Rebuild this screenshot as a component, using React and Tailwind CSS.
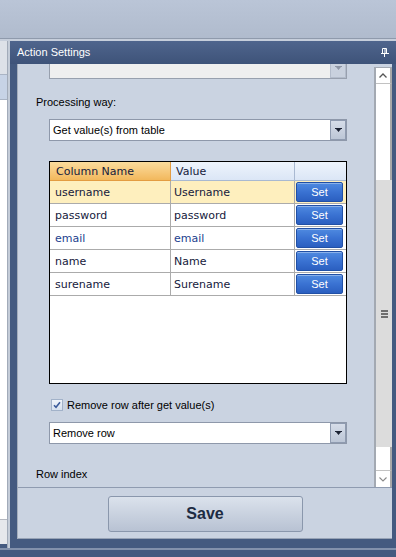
import React from "react";

function Arrow({ faded }) {
  return (
    <svg width="7" height="4" viewBox="0 0 7 4" className="block">
      <path d="M0 0h7v1H0z M1 1h5L3.5 4z" fill={faded ? "#8d95a5" : "#1b2233"} />
    </svg>
  );
}

function Combo({ text, disabled, className = "" }) {
  return (
    <div
      className={
        "ml-[31px] w-[298px] h-[22px] shrink-0 border flex items-stretch " +
        (disabled ? "bg-[#efefef] border-[#98a0ae] " : "bg-white border-[#8e98aa] ") +
        className
      }
    >
      <div className="flex-1 flex items-center pl-[3px] text-black leading-none">{text}</div>
      <div
        className={
          "w-[16px] border flex items-center justify-center " +
          (disabled
            ? "border-[#b3bccb] bg-[#c9d1de]"
            : "border-[#8f9bb0] bg-gradient-to-b from-[#d6dde9] to-[#bcc6d6]")
        }
      >
        <Arrow faded={disabled} />
      </div>
    </div>
  );
}

function SetButton() {
  return (
    <div className="ml-px w-[47px] h-[20px] rounded-[2px] border border-[#2150a6] bg-gradient-to-b from-[#4f8ae0] via-[#3a72d2] to-[#2b5fc0] flex items-center justify-center text-white text-[11px] leading-none font-['Liberation_Sans',Arial,sans-serif] shadow-[inset_0_1px_0_rgba(255,255,255,0.35)]">
      Set
    </div>
  );
}

export default function App() {
  const rows = [
    ["username", "Username", true],
    ["password", "password"],
    ["email", "email"],
    ["name", "Name"],
    ["surename", "Surename"],
  ];
  return (
    <div className="w-[396px] h-[557px] overflow-hidden bg-[#445a80] flex flex-col font-['Liberation_Sans',Arial,sans-serif] text-[11px]">
      {/* top toolbar area */}
      <div className="h-[38px] shrink-0 bg-gradient-to-b from-[#bac5d7] to-[#b0bbcd]" />
      <div className="h-px shrink-0 bg-[#8f9aac]" />
      <div className="h-[2px] shrink-0 bg-[#c6cedb]" />

      <div className="flex h-[507px] shrink-0">
        {/* underlying window strip on the left */}
        <div className="w-[8px] flex flex-col border-r border-[#a2abb9]">
          <div className="h-[34px] bg-[#dde1e8] border-b border-[#aab4c4]" />
          <div className="h-[25px] bg-[#c7d3e6] border-b border-[#aab4c4]" />
          <div className="h-[420px] bg-white border-b border-[#b4b8c0]" />
          <div className="h-[24px] bg-[#e6e8ec]" />
        </div>
        <div className="w-[2px] bg-[#c4ccd8]" />

        {/* Action Settings window */}
        <div className="flex-1 flex flex-col">
          <div className="h-[23px] shrink-0 bg-gradient-to-b from-[#4f658d] to-[#3e5379] flex items-center pl-[7px] pr-[6px] justify-between">
            <span className="text-white text-[11px] leading-none">Action Settings</span>
            <svg width="8" height="9" viewBox="0 0 8 9" className="mr-[1px]">
              <path d="M1.5 0.5h4v5h-4z" fill="none" stroke="#fff" strokeWidth="1" />
              <path d="M3.5 0.5h1v5h-1z" fill="#fff" />
              <path d="M0 5.5h8" stroke="#fff" strokeWidth="1" />
              <path d="M3.5 6v3" stroke="#fff" strokeWidth="1" />
            </svg>
          </div>

          <div className="flex flex-1 min-h-0">
            <div className="w-[7px]" />
            <div className="flex-1 flex flex-col bg-[#cad3e1] border-l border-[#a3adbb]">
              {/* scrollable region */}
              <div className="h-[423px] shrink-0 flex">
                <div className="flex-1 overflow-hidden flex flex-col text-black">
                  <Combo text="" disabled className="mt-[-7px]" />
                  <div className="ml-[18px] mt-[16px] h-[14px] leading-[14px]">Processing way:</div>
                  <Combo text="Get value(s) from table" className="mt-[10px]" />

                  {/* table */}
                  <div className="ml-[31px] mt-[20px] w-[298px] h-[223px] shrink-0 border border-black bg-white flex flex-col font-['DejaVu_Sans',Verdana,sans-serif] text-[11px] text-[#15203c]">
                    <div className="grid grid-cols-[121px_124px_1fr] h-[19px] shrink-0">
                      <div className="bg-gradient-to-b from-[#fbdc9c] to-[#f2b85c] border-r border-b border-[#e39c42] flex items-center pl-[6px] leading-none">
                        Column Name
                      </div>
                      <div className="bg-gradient-to-b from-[#eef4fc] to-[#dbe6f6] border-r border-b border-[#a9b9d1] flex items-center pl-[5px] leading-none">
                        Value
                      </div>
                      <div className="bg-gradient-to-b from-[#eef4fc] to-[#dbe6f6] border-b border-[#a9b9d1]" />
                    </div>
                    {rows.map(([a, b, sel]) => (
                      <div
                        key={a}
                        className={
                          "grid grid-cols-[121px_124px_1fr] h-[23px] shrink-0 border-b border-[#ababab] " +
                          (sel ? "bg-[#feefbe]" : "bg-white")
                        }
                      >
                        <div className={"border-r border-[#ababab] flex items-center pl-[5px] leading-none " + (a === "email" ? "text-[#1c3f8e]" : "")}>
                          {a}
                        </div>
                        <div className={"border-r border-[#ababab] flex items-center pl-[3px] leading-none " + (a === "email" ? "text-[#1c3f8e]" : "")}>
                          {b}
                        </div>
                        <div className="flex items-center">
                          <SetButton />
                        </div>
                      </div>
                    ))}
                  </div>

                  <div className="ml-[33px] mt-[14px] h-[14px] flex items-center gap-[4px]">
                    <div className="w-[12px] h-[12px] border border-[#a2b2c9] bg-gradient-to-b from-[#f0f4fa] to-[#d6e0ee] flex items-center justify-center">
                      <svg width="8" height="8" viewBox="0 0 8 8">
                        <path d="M1 4.2l2 2L7 1.2" fill="none" stroke="#3a5a9a" strokeWidth="1.6" />
                      </svg>
                    </div>
                    <span className="leading-none">Remove row after get value(s)</span>
                  </div>

                  <Combo text="Remove row" className="mt-[10px]" />

                  <div className="ml-[18px] mt-[23px] h-[14px] leading-[14px]">Row index</div>
                </div>

                {/* scrollbar */}
                <div className="w-[18px] mt-[3px] flex flex-col border-l-2 border-t border-[#a3a9b2] bg-white">
                  <div className="h-[16px] shrink-0 border-b border-r-2 border-[#c2c2c2] border-r-[#a8a8a8] flex items-center justify-center">
                    <svg width="8" height="5" viewBox="0 0 8 5">
                      <path d="M0.5 4.5L4 1l3.5 3.5" fill="none" stroke="#555" strokeWidth="1.3" />
                    </svg>
                  </div>
                  <div className="flex-1 flex flex-col">
                    <div className="h-[96px] border-r-2 border-[#a8a8a8]" />
                    <div className="h-[267px] bg-[#dcdcdc] flex flex-col items-center justify-center gap-[1px]">
                      <div className="w-[7px] h-[2px] bg-[#6e6e6e]" />
                      <div className="w-[7px] h-[2px] bg-[#6e6e6e]" />
                      <div className="w-[7px] h-[2px] bg-[#6e6e6e]" />
                    </div>
                    <div className="flex-1 border-r-2 border-[#a8a8a8]" />
                  </div>
                  <div className="h-[17px] shrink-0 border-t border-r-2 border-[#c2c2c2] border-r-[#a8a8a8] flex items-center justify-center">
                    <svg width="8" height="5" viewBox="0 0 8 5">
                      <path d="M0.5 0.5L4 4l3.5-3.5" fill="none" stroke="#8a8a8a" strokeWidth="1.1" />
                    </svg>
                  </div>
                </div>
              </div>

              <div className="h-px shrink-0 bg-[#8f9bb0]" />

              {/* footer */}
              <div className="h-[51px] shrink-0 border-b border-[#97a3b6] flex justify-center pt-[8px]">
                <div className="w-[195px] h-[36px] rounded-[3px] border border-[#8a97ac] bg-gradient-to-b from-[#dbe2ec] to-[#b8c2d3] flex items-center justify-center font-bold text-[16px] text-[#1d2b42] leading-none">
                  Save
                </div>
              </div>
            </div>
            <div className="w-[4px]" />
          </div>
          <div className="h-[9px] shrink-0" />
        </div>
      </div>

      <div className="h-[2px] shrink-0 bg-[#8291ac]" />
      <div className="flex-1" />
    </div>
  );
}
